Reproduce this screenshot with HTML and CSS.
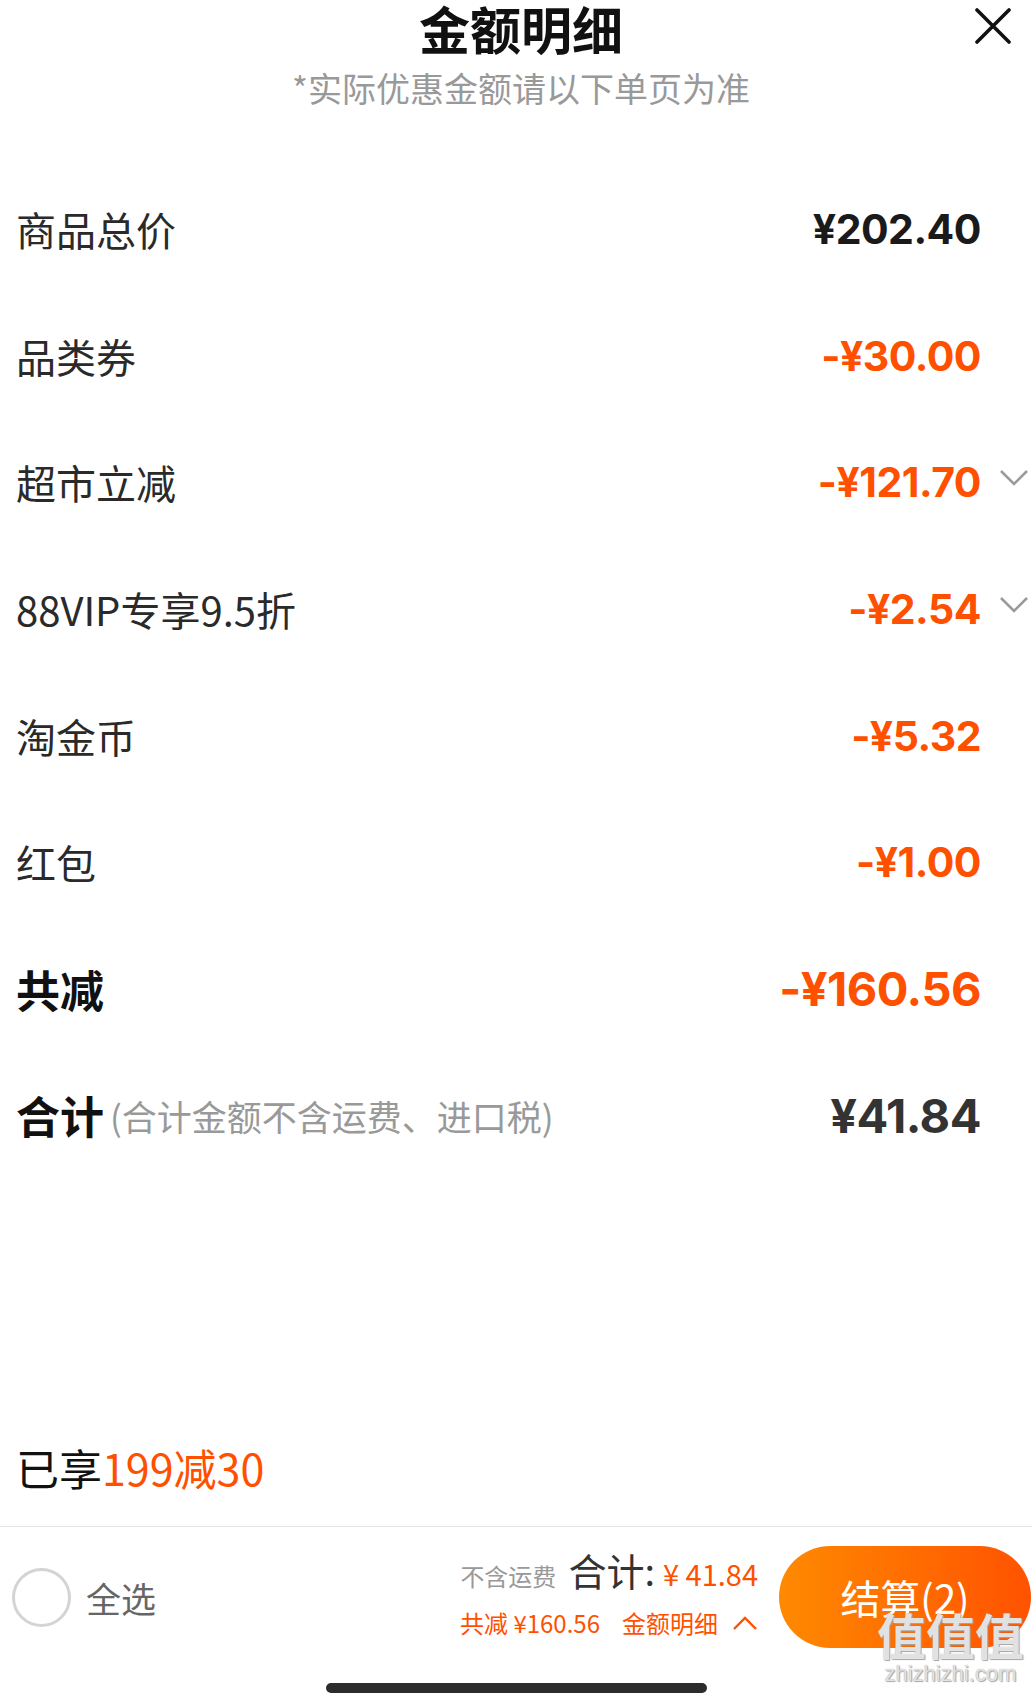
FILE: index.html
```html
<!DOCTYPE html>
<html>
	<head>
		<meta charset="utf-8">
		<title>金额明细</title>
		<link rel="stylesheet" href="styles.css">
	</head>
	<body>
		<div id=Sheet>
			<div id=Header>
				<div class=Title>金额明细</div>
				<div class=Subtitle>*实际优惠金额请以下单页为准</div>
				<svg class=Close viewBox="0 0 36 36" width="36" height="36">
					<path d="M2 2 L34 34 M34 2 L2 34" stroke="#111" stroke-width="3.6" stroke-linecap="round" fill="none"/>
				</svg>
			</div>

			<div id=Lines>
				<div class=Line>
					<span class=Label>商品总价</span>
					<span class=Amount>¥202.40</span>
				</div>
				<div class=Line>
					<span class=Label>品类券</span>
					<span class="Amount Off">-¥30.00</span>
				</div>
				<div class=Line>
					<span class=Label>超市立减</span>
					<span class="Amount Off">-¥121.70</span>
					<svg class=Chevron viewBox="0 0 30 18" width="30" height="18"><path d="M2 2 L15 15 L28 2" stroke="#9a9a9a" stroke-width="2.6" fill="none"/></svg>
				</div>
				<div class=Line>
					<span class=Label>88VIP专享9.5折</span>
					<span class="Amount Off">-¥2.54</span>
					<svg class=Chevron viewBox="0 0 30 18" width="30" height="18"><path d="M2 2 L15 15 L28 2" stroke="#9a9a9a" stroke-width="2.6" fill="none"/></svg>
				</div>
				<div class=Line>
					<span class=Label>淘金币</span>
					<span class="Amount Off">-¥5.32</span>
				</div>
				<div class=Line>
					<span class=Label>红包</span>
					<span class="Amount Off">-¥1.00</span>
				</div>
				<div class="Line Big">
					<span class=Label>共减</span>
					<span class="Amount Off">-¥160.56</span>
				</div>
				<div class="Line Big">
					<span class=Label>合计<span class=Note>(合计金额不含运费、进口税)</span></span>
					<span class="Amount Dark">¥41.84</span>
				</div>
			</div>

			<div id=Promo>已享<span class=Hot>199减30</span></div>

			<div id=Footer>
				<div class=Bar>
					<div class=SelectAll>
						<span class=Radio></span>
						<span>全选</span>
					</div>
					<div class=Summary>
						<div class=SumRow>
							<span class=Muted>不含运费</span>
							<span class=SumLabel>合计:</span>
							<span class=SumPrice>¥ 41.84</span>
						</div>
						<div class=SumRow>
							<span class=Saved>共减 ¥160.56</span>
							<span class=Detail>金额明细</span>
							<svg viewBox="0 0 26 16" width="26" height="16"><path d="M2 14 L13 3 L24 14" stroke="#ff5000" stroke-width="2.4" fill="none"/></svg>
						</div>
					</div>
					<div class=Checkout>结算(2)</div>
				</div>
				<div class=HomeBar></div>
			</div>

			<div class=Watermark>
				<div class=Mark>值值值</div>
				<div class=Site>zhizhizhi.com</div>
			</div>
		</div>
	</body>
</html>
```

FILE: styles.css
```css
:root
{
	--orange: #ff5000;
	--ink: #222;
	--grey: #999;
	--cjk: "Noto Sans CJK SC", "Noto Sans", sans-serif;
	--num: Inter, "Noto Sans CJK SC", sans-serif;
}

html,
body
{
	margin: 0;
	padding: 0;
	background: #fff;
}

#Sheet
{
	position: relative;	/* for the watermark */
	display: flex;
	flex-direction: column;
	width: 1032px;
	height: 1693px;
	overflow: hidden;
	font-family: var(--cjk);
	color: var(--ink);
}

#Header
{
	position: relative;
	display: flex;
	flex-direction: column;
	align-items: center;
	padding-left: 10px;
	padding-top: 2px;
}

#Header .Title
{
	font-size: 51px;
	line-height: 52px;
	font-weight: bold;
	color: #111;
}

#Header .Subtitle
{
	margin-top: 14px;
	font-size: 34px;
	line-height: 40px;
	color: var(--grey);
}

#Header .Close
{
	position: absolute;
	top: 8px;
	right: 21px;
}

#Lines
{
	display: flex;
	flex-direction: column;
	margin-top: 58px;
}

.Line
{
	display: flex;
	align-items: center;
	height: 126.6px;
	padding: 0 51px 0 16px;
	position: relative;
}

.Line .Label
{
	flex: 1;
	font-size: 40px;
	color: #2a2a2a;
}

.Line .Amount
{
	font-family: var(--num);
	font-size: 41px;
	font-weight: 700;
	color: #1a1a1a;
	letter-spacing: -0.5px;
}

.Line .Off
{
	color: var(--orange);
}

.Line .Dark
{
	color: #333;
}

.Line .Chevron
{
	position: absolute;
	right: 3px;
	top: 50%;
	margin-top: -13px;
}

.Line.Big .Label
{
	font-size: 44px;
	font-weight: bold;
	color: #111;
	display: flex;
	align-items: center;
}

.Line.Big .Amount
{
	font-size: 47px;
}

.Line .Note
{
	font-size: 35px;
	font-weight: normal;
	color: var(--grey);
	margin-left: 6px;
}

#Promo
{
	margin-top: auto;
	padding: 0 16px 29px;
	font-size: 43px;
	line-height: 60px;
	color: #111;
}

#Promo .Hot
{
	color: var(--orange);
}

#Footer
{
	border-top: 1px solid #e4e4e4;
	display: flex;
	flex-direction: column;
	align-items: center;
}

#Footer .Bar
{
	align-self: stretch;
	display: flex;
	align-items: center;
	padding: 19px 1px 0 12px;
}

.SelectAll
{
	flex: 1;
	display: flex;
	align-items: center;
	gap: 15px;
	font-size: 35px;
	color: #666;
}

.SelectAll .Radio
{
	box-sizing: border-box;
	width: 59px;
	height: 59px;
	border-radius: 50%;
	border: 3px solid #d4d4d4;
}

.Summary
{
	display: flex;
	flex-direction: column;
	align-items: flex-end;
	margin-right: 21px;
	margin-top: -12px;
}

.SumRow
{
	display: flex;
	align-items: baseline;
	gap: 12px;
}

.SumRow:last-child
{
	align-items: center;
	margin-top: 8px;
	gap: 14px;
}

.Muted
{
	font-size: 24px;
	color: var(--grey);
}

.SumLabel
{
	font-size: 38px;
	color: #333;
	margin-right: -4px;
}

.SumPrice
{
	font-size: 29px;
	color: var(--orange);
}

.Saved,
.Detail
{
	font-size: 24px;
	color: var(--orange);
}

.Saved
{
	margin-right: 8px;
}

.Checkout
{
	width: 252px;
	height: 102px;
	border-radius: 51px;
	background: linear-gradient(90deg, #ff8a00, #ff5200);
	color: #fff;
	font-size: 40px;
	display: flex;
	align-items: center;
	justify-content: center;
}

.HomeBar
{
	width: 381px;
	height: 10px;
	margin-top: 35px;
	border-radius: 5px;
	background: #2c2c2c;
}

.Watermark
{
	position: absolute;
	right: 8px;
	bottom: 6px;
	display: flex;
	flex-direction: column;
	align-items: center;
	color: rgba(255,255,255,0.75);
	text-shadow: 0 0 1px #888, 1px 1px 1px #aaa;
}

.Watermark .Mark
{
	font-size: 49px;
	line-height: 54px;
	font-weight: bold;
}

.Watermark .Site
{
	font-family: "Liberation Sans", sans-serif;
	font-size: 22px;
	line-height: 26px;
}
```
